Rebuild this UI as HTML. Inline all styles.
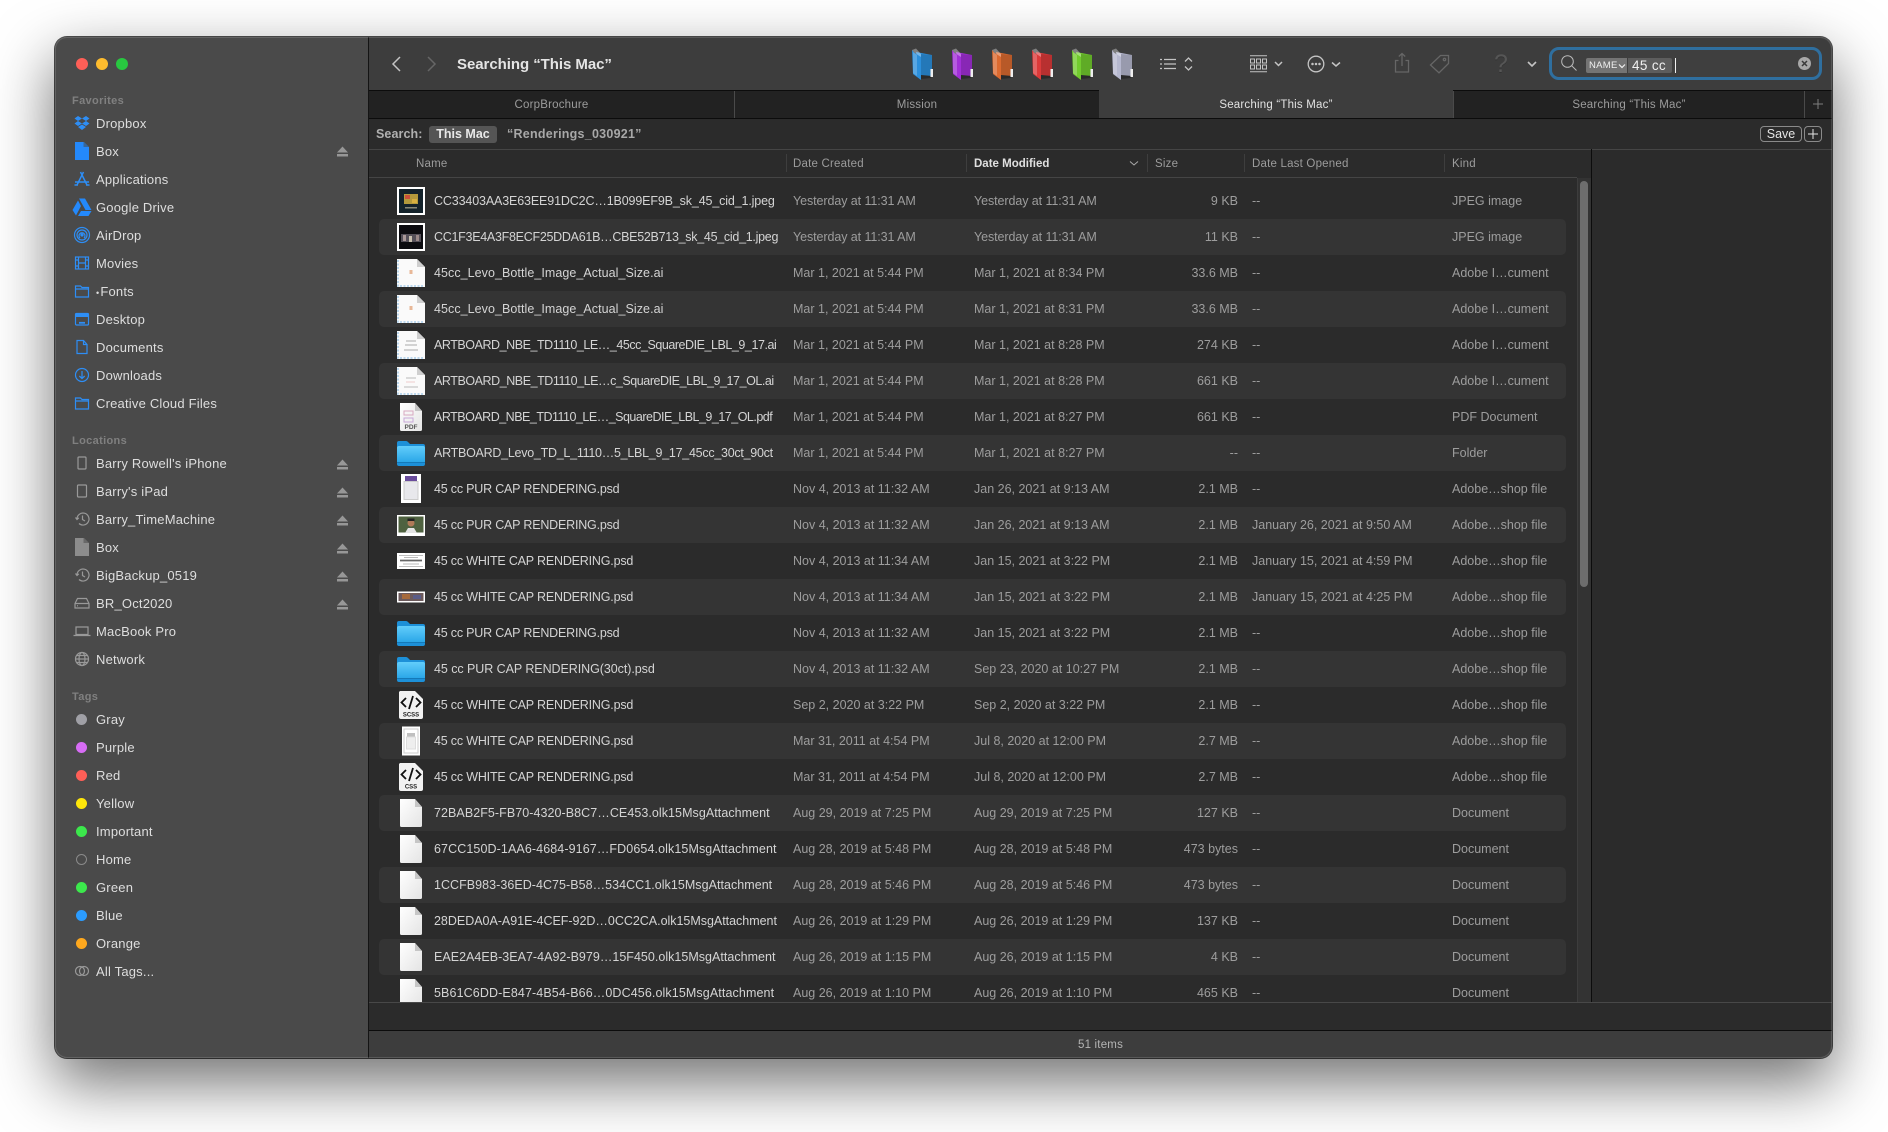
<!DOCTYPE html>
<html><head><meta charset="utf-8"><title>Finder</title>
<style>
html,body{margin:0;padding:0;background:#fff}
#root{position:relative;width:1888px;height:1132px;overflow:hidden;background:#fff;font-family:"Liberation Sans",sans-serif;font-size:13px}
#root div,#root span,#root svg{position:absolute}
#shadow{left:55px;top:37px;width:1777px;height:1021px;border-radius:12px;box-shadow:0 24px 60px 2px rgba(0,0,0,.55),0 0 0 1px rgba(20,20,20,.75)}
#win{left:55px;top:37px;width:1777px;height:1021px;border-radius:12px;overflow:hidden;background:#2b2b2b}
#in{left:-55px;top:-37px;width:1888px;height:1132px}
#edge{left:55px;top:37px;width:1775px;height:1019px;border-radius:12px;border:1px solid rgba(255,255,255,.14);pointer-events:none}
.s{left:96px;color:#dedede;line-height:16px;white-space:nowrap;letter-spacing:.2px;transform:translateY(1px)}
.h{left:72px;color:#8a8a8a;font-size:11px;line-height:14px;font-weight:bold;letter-spacing:.35px;opacity:.85;transform:translateY(1px)}
.i{left:73px;width:18px;height:18px;fill:none;stroke:#2e8ef5;stroke-width:1.2}
.g{stroke:#999}
.e{left:336px;width:13px;height:11px;fill:#979797}
.t{left:76px;width:11px;height:11px;border-radius:50%}
.tab{top:90px;height:28px;line-height:31px;text-align:center;font-size:11.5px;color:#9c9c9c;letter-spacing:.2px;white-space:nowrap}
.col{top:149px;height:28px;line-height:31px;font-size:11.5px;color:#9c9c9c;letter-spacing:.2px;white-space:nowrap}
.sep{top:154px;width:1px;height:18px;background:#3e3e3e}
.r{left:368px;width:1209px;height:36px}
.r.a::before{content:"";position:absolute;left:11px;top:0;width:1187px;height:36px;background:#343434;border-radius:5px}
.r span{top:10px;line-height:16px;white-space:nowrap;color:#9d9d9d;font-size:12.5px;letter-spacing:0}
.r .n{left:66px;color:#d4d4d4;font-size:12.5px;letter-spacing:0}
.r .c{left:425px}.r .m{left:606px}.r .z{right:339px}.r .o{left:884px}.r .k{left:1084px}
.r .y{letter-spacing:-.08px}
.r svg{left:29px;top:4px;width:28px;height:28px}
.tb{fill:none;stroke:#c4c4c4;stroke-width:1.3}
.dim{fill:none;stroke:#666;stroke-width:1.3}
.ff{top:48px;width:24px;height:33px}
</style></head><body>
<svg width="0" height="0" style="position:absolute">
<defs>
<linearGradient id="fb" x1="0" y1="0" x2="0" y2="1"><stop offset="0" stop-color="#62cdfb"/><stop offset="1" stop-color="#2ba7e8"/></linearGradient>
<linearGradient id="dg" x1="0" y1="0" x2="1" y2="1"><stop offset="0" stop-color="#fff"/><stop offset="1" stop-color="#e4e4e4"/></linearGradient>
<symbol id="doc" viewBox="0 0 28 28"><path d="M3 0H18L25 8V26.5a1.5 1.5 0 0 1-1.5 1.5H4.500a1.500 1.500 0 0 1-1.500-1.500Z" fill="url(#dg)"/><path d="M18 0L25 8H18Z" fill="#c6c6c6"/></symbol>
<symbol id="ai" viewBox="0 0 28 28"><path d="M0 0H20L28 8V28H0Z" fill="#fafafa"/><path d="M1 1V27H27" fill="none" stroke="#bcd8ee" stroke-width="2" stroke-dasharray="2 1.500"/><path d="M20 0L28 8H20Z" fill="#cfcfcf"/></symbol>
<symbol id="fo" viewBox="0 0 28 28"><path d="M0 4a2 2 0 0 1 2-2h7a3 3 0 0 1 2 1l2 2h13a2 2 0 0 1 2 2v18a2 2 0 0 1-2 2H2a2 2 0 0 1-2-2Z" fill="#1d90d8"/><path d="M0 9a2 2 0 0 1 2-2h24a2 2 0 0 1 2 2v14H0Z" fill="url(#fb)"/><path d="M0 23.500H28" stroke="#1479b8" stroke-width="1"/></symbol>
<symbol id="ff" viewBox="0 0 24 33"><path d="M4 4L20 7V28L9 27Z" fill="currentColor"/><path d="M9 6L20 7V28L9 27Z" fill="#000" opacity=".16"/><path d="M0 2L2 4.500L9 9V32L1 26Z" fill="currentColor"/><path d="M0 2L4 .500L9 6V9L2 4.500Z" fill="#fff" opacity=".35"/><path d="M1 4L5 7V28L1 25Z" fill="#fff" opacity=".22"/><path d="M9 27L20 28L19 30L9 31Z" fill="#000" opacity=".3"/><rect x="18.500" y="21" width="2.500" height="8" fill="#eee"/></symbol>
</defs></svg>
<div id="root">
<div id="shadow"></div>
<div id="win"><div id="in">
<!-- backgrounds -->
<div style="left:55px;top:37px;width:313px;height:1021px;background:#4a4a4a"></div>
<div style="left:368px;top:37px;width:1px;height:1021px;background:#141414"></div>
<div style="left:369px;top:37px;width:1463px;height:53px;background:#3d3d3d"></div>
<div style="left:369px;top:90px;width:1463px;height:1px;background:#0c0c0c"></div>
<div style="left:369px;top:91px;width:1463px;height:27px;background:#222"></div>
<div style="left:369px;top:118px;width:1463px;height:1px;background:#0c0c0c"></div>
<div style="left:369px;top:119px;width:1463px;height:884px;background:#2b2b2b"></div>
<div style="left:369px;top:149px;width:1463px;height:1px;background:#454545"></div>
<div style="left:369px;top:177px;width:1208px;height:1px;background:#454545"></div>
<div style="left:369px;top:1002px;width:1463px;height:1px;background:#484848"></div>
<div style="left:369px;top:1003px;width:1463px;height:27px;background:#2b2b2b"></div>
<div style="left:369px;top:1030px;width:1463px;height:1px;background:#0c0c0c"></div>
<div style="left:369px;top:1031px;width:1463px;height:27px;background:#3d3d3d"></div>

<!-- traffic lights -->
<div style="left:76px;top:58px;width:12px;height:12px;border-radius:50%;background:#fe5f57"></div>
<div style="left:96px;top:58px;width:12px;height:12px;border-radius:50%;background:#febc2e"></div>
<div style="left:116px;top:58px;width:12px;height:12px;border-radius:50%;background:#28c840"></div>

<!-- sidebar -->
<div class="h" style="top:93px">Favorites</div>
<svg class="i" style="top:114px;stroke:none;fill:#2e8ef5" viewBox="0 0 18 18"><path d="M5 2L9 4.500L5 7L1.500 4.500ZM13 2L16.500 4.500L13 7L9 4.500ZM5 7L9 9.500L5 12L1.500 9.500ZM13 7L16.500 9.500L13 12L9 9.500ZM5 13L9 10.500L13 13L9 16Z"/></svg>
<div class="s" style="top:115px">Dropbox</div>
<svg class="i" style="top:142px;stroke:none;fill:#2489fb" viewBox="0 0 18 18"><path d="M2 -.500H10.500L16 5V18H2Z"/><path d="M10.500 -.500L16 5H10.500Z" fill="#4a4a4a" opacity=".55"/></svg>
<div class="s" style="top:143px">Box</div>
<svg class="i" style="top:170px;stroke-width:1.500" viewBox="0 0 18 18"><path d="M7.500 2L14 15M10.500 2L4 15M2 12H16M1.500 15H5M13 15H16.500"/></svg>
<div class="s" style="top:171px">Applications</div>
<svg class="i" style="top:198px;stroke:none;fill:#2489fb;left:72px;width:20px;height:19px" viewBox="0 0 20 19"><path d="M7 .500H13L19.500 12H13.500ZM6 2.500L9 8L4 17.500L.5 12ZM6 18L9 13H19.500L16.500 18Z"/></svg>
<div class="s" style="top:199px">Google Drive</div>
<svg class="i" style="top:226px" viewBox="0 0 18 18"><circle cx="9" cy="9" r="7.500"/><circle cx="9" cy="9" r="5"/><path d="M7 12a3 3 0 1 1 4 0"/><circle cx="9" cy="9" r="1" fill="#2e8ef5"/></svg>
<div class="s" style="top:227px">AirDrop</div>
<svg class="i" style="top:254px" viewBox="0 0 18 18"><rect x="2.500" y="3" width="13" height="12"/><path d="M5.500 3V15M12.500 3V15M5.500 9H12.500M2.500 6H5.500M12.500 6H15.500M2.500 12H5.500M12.500 12H15.500"/></svg>
<div class="s" style="top:255px">Movies</div>
<svg class="i" style="top:282px" viewBox="0 0 18 18"><path d="M2.500 4H7.500L9 5.500H15.500V15H2.500ZM2.500 7H15.500"/></svg>
<div class="s" style="top:283px"><i style="font-style:normal;font-size:9px;margin-right:1px">•</i>Fonts</div>
<svg class="i" style="top:310px" viewBox="0 0 18 18"><rect x="2.500" y="3.500" width="13" height="11.500" rx="1"/><path d="M2.500 5.500H15.500" stroke-width="3"/><path d="M6 12.800H12" stroke-width="1.800"/></svg>
<div class="s" style="top:311px">Desktop</div>
<svg class="i" style="top:338px" viewBox="0 0 18 18"><path d="M4 2.500H10.500L14 6.500V15.500H4ZM10.500 2.500V6.500H14"/></svg>
<div class="s" style="top:339px">Documents</div>
<svg class="i" style="top:366px" viewBox="0 0 18 18"><circle cx="9" cy="9" r="6.500"/><path d="M9 5V12.500M6.300 10L9 12.500L11.700 10"/></svg>
<div class="s" style="top:367px">Downloads</div>
<svg class="i" style="top:394px" viewBox="0 0 18 18"><path d="M2.500 4H7.500L9 5.500H15.500V15H2.500ZM2.500 7H15.500"/></svg>
<div class="s" style="top:395px">Creative Cloud Files</div>

<div class="h" style="top:433px">Locations</div>
<svg class="i g" style="top:454px" viewBox="0 0 18 18"><rect x="5" y="3" width="8" height="12" rx="1"/></svg>
<div class="s" style="top:455px">Barry Rowell's iPhone</div>
<svg class="i g" style="top:482px" viewBox="0 0 18 18"><rect x="4.500" y="3" width="9" height="12" rx="1"/></svg>
<div class="s" style="top:483px">Barry's iPad</div>
<svg class="i g" style="top:510px" viewBox="0 0 18 18"><path d="M4 9a6 6 0 1 1 2 4.500M2.500 7.500L4 9.500L5.800 7.800M9.500 5.500V9.500L12 11"/></svg>
<div class="s" style="top:511px">Barry_TimeMachine</div>
<svg class="i" style="top:538px;stroke:none;fill:#8c8c8c" viewBox="0 0 18 18"><path d="M2 -.500H10.500L16 5V18H2Z"/><path d="M10.500 -.500L16 5H10.500Z" fill="#4a4a4a" opacity=".55"/></svg>
<div class="s" style="top:539px">Box</div>
<svg class="i g" style="top:566px" viewBox="0 0 18 18"><path d="M4 9a6 6 0 1 1 2 4.500M2.500 7.500L4 9.500L5.800 7.800M9.500 5.500V9.500L12 11"/></svg>
<div class="s" style="top:567px">BigBackup_0519</div>
<svg class="i g" style="top:594px" viewBox="0 0 18 18"><path d="M4.500 4.500H13.500L16 9.500V14H2V9.500ZM2 9.500H16M4 11.800H5"/></svg>
<div class="s" style="top:595px">BR_Oct2020</div>
<svg class="i g" style="top:622px" viewBox="0 0 18 18"><path d="M3 5H15V12.500H3ZM.5 13.500H17.500"/></svg>
<div class="s" style="top:623px">MacBook Pro</div>
<svg class="i g" style="top:650px" viewBox="0 0 18 18"><circle cx="9" cy="9" r="6.500"/><ellipse cx="9" cy="9" rx="3" ry="6.500"/><path d="M2.500 9H15.500M3.500 5.500H14.500M3.500 12.500H14.500"/></svg>
<div class="s" style="top:651px">Network</div>

<div class="h" style="top:689px">Tags</div>
<div class="t" style="top:714px;background:#a0a0a6"></div><div class="s" style="top:711px">Gray</div>
<div class="t" style="top:742px;background:#d76cf5"></div><div class="s" style="top:739px">Purple</div>
<div class="t" style="top:770px;background:#fe5f57"></div><div class="s" style="top:767px">Red</div>
<div class="t" style="top:798px;background:#fee60a"></div><div class="s" style="top:795px">Yellow</div>
<div class="t" style="top:826px;background:#3ce84c"></div><div class="s" style="top:823px">Important</div>
<div class="t" style="top:854px;border:1px solid #8a8a8a;width:9px;height:9px"></div><div class="s" style="top:851px">Home</div>
<div class="t" style="top:882px;background:#3ce84c"></div><div class="s" style="top:879px">Green</div>
<div class="t" style="top:910px;background:#2b9cff"></div><div class="s" style="top:907px">Blue</div>
<div class="t" style="top:938px;background:#fea81e"></div><div class="s" style="top:935px">Orange</div>
<svg class="i g" style="top:962px" viewBox="0 0 18 18"><circle cx="7" cy="9" r="4.500"/><circle cx="11" cy="9" r="4.500"/></svg>
<div class="s" style="top:963px">All Tags...</div>

<!-- eject -->
<svg class="e" style="top:146px" viewBox="0 0 13 11"><path d="M6.500 .5L12 6.500H1ZM1 8H12V10.500H1Z"/></svg>
<svg class="e" style="top:459px" viewBox="0 0 13 11"><path d="M6.500 .5L12 6.500H1ZM1 8H12V10.500H1Z"/></svg>
<svg class="e" style="top:487px" viewBox="0 0 13 11"><path d="M6.500 .5L12 6.500H1ZM1 8H12V10.500H1Z"/></svg>
<svg class="e" style="top:515px" viewBox="0 0 13 11"><path d="M6.500 .5L12 6.500H1ZM1 8H12V10.500H1Z"/></svg>
<svg class="e" style="top:543px" viewBox="0 0 13 11"><path d="M6.500 .5L12 6.500H1ZM1 8H12V10.500H1Z"/></svg>
<svg class="e" style="top:571px" viewBox="0 0 13 11"><path d="M6.500 .5L12 6.500H1ZM1 8H12V10.500H1Z"/></svg>
<svg class="e" style="top:599px" viewBox="0 0 13 11"><path d="M6.500 .5L12 6.500H1ZM1 8H12V10.500H1Z"/></svg>

<!-- toolbar -->
<svg class="tb" style="left:389px;top:54px;width:16px;height:20px" viewBox="0 0 16 20"><path d="M11 3L4 10L11 17" stroke-width="1.500"/></svg>
<svg class="dim" style="left:423px;top:54px;width:16px;height:20px" viewBox="0 0 16 20"><path d="M5 3L12 10L5 17" stroke-width="1.500"/></svg>
<div style="left:457px;top:55px;font-size:15px;font-weight:bold;color:#e4e4e4;line-height:20px;white-space:nowrap;letter-spacing:-.05px">Searching “This Mac”</div>
<svg class="ff" style="left:912px;color:#2b8fdc"><use href="#ff"/></svg>
<svg class="ff" style="left:952px;color:#a22fd8"><use href="#ff"/></svg>
<svg class="ff" style="left:992px;color:#dc6a30"><use href="#ff"/></svg>
<svg class="ff" style="left:1032px;color:#dc3a3a"><use href="#ff"/></svg>
<svg class="ff" style="left:1072px;color:#72cc2e"><use href="#ff"/></svg>
<svg class="ff" style="left:1112px;color:#b6b8cf"><use href="#ff"/></svg>
<svg class="tb" style="left:1159px;top:56px;width:34px;height:16px" viewBox="0 0 34 16"><path d="M5 3.500H17M5 8H17M5 12.500H17M1 3.500H3M1 8H3M1 12.500H3M26 5.500L29.500 2L33 5.500M26 10.500L29.500 14L33 10.500"/></svg>
<svg class="tb" style="left:1249px;top:55px;width:36px;height:18px" viewBox="0 0 36 18"><path d="M1 .7H18M1 16.800H18M1.500 4H5.500V8H1.500ZM7.500 4H11.500V8H7.500ZM13.500 4H17.500V8H13.500ZM1.500 10H5.500V14H1.500ZM7.500 10H11.500V14H7.500ZM13.500 10H17.500V14H13.500Z" stroke-width="1"/><path d="M26 7L29.500 10.500L33 7" stroke-width="1.500"/></svg>
<svg class="tb" style="left:1307px;top:55px;width:36px;height:18px" viewBox="0 0 36 18"><circle cx="9" cy="9" r="7.800"/><circle cx="5.500" cy="9" r=".6" fill="#c4c4c4"/><circle cx="9" cy="9" r=".6" fill="#c4c4c4"/><circle cx="12.500" cy="9" r=".6" fill="#c4c4c4"/><path d="M25 7.500L29 11L33 7.500" stroke-width="1.500"/></svg>
<svg class="dim" style="left:1394px;top:52px;width:16px;height:21px" viewBox="0 0 16 21"><path d="M4.500 8.500H1.500V20H14.500V8.500H11.500M8 14V1.500M4.800 4.500L8 1.500L11.200 4.500"/></svg>
<svg class="dim" style="left:1429px;top:54px;width:22px;height:20px" viewBox="0 0 22 20"><path d="M1.500 11L11.500 1.500H19.500V9.500L10 18.800Z"/><circle cx="15.500" cy="5.500" r="1.200"/></svg>
<div style="left:1494px;top:51px;font-size:25px;line-height:26px;color:#565656;text-shadow:0 1px 0 #333">?</div>
<svg class="tb" style="left:1526px;top:58px;width:12px;height:12px" viewBox="0 0 12 12"><path d="M2 4L6 8L10 4" stroke-width="1.600"/></svg>

<!-- search field -->
<div style="left:1549px;top:47px;width:267px;height:27px;border:3.500px solid #2f6f9f;border-radius:10px;background:#3f3f3f"></div>
<svg style="left:1560px;top:54px;width:18px;height:18px;fill:none;stroke:#bbb;stroke-width:1" viewBox="0 0 18 18"><circle cx="7.500" cy="7.500" r="5.800"/><path d="M11.800 11.800L16.500 16.500"/></svg>
<div style="left:1586px;top:58px;width:41px;height:15px;background:#747474;border-radius:2px 0 0 2px"></div>
<div style="left:1589px;top:58px;color:#f0f0f0;font-size:9.500px;line-height:16px;letter-spacing:.3px">NAME</div>
<svg style="left:1618px;top:62px;width:8px;height:8px;fill:none;stroke:#f0f0f0;stroke-width:1.200" viewBox="0 0 8 8"><path d="M1 2.500L4 5.500L7 2.500"/></svg>
<div style="left:1628px;top:58px;width:44px;height:15px;background:#5d5d5d;border-radius:0 2px 2px 0"></div>
<div style="left:1632px;top:57px;color:#f0f0f0;font-size:13.500px;line-height:17px;letter-spacing:.35px">45 cc</div>
<div style="left:1675px;top:58px;width:1px;height:15px;background:#f0f0f0"></div>
<div style="left:1798px;top:57px;width:13px;height:13px;border-radius:50%;background:#a8a8a8"></div>
<svg style="left:1798px;top:57px;width:13px;height:13px;fill:none;stroke:#3a3a3a;stroke-width:1.500" viewBox="0 0 13 13"><path d="M4 4L9 9M9 4L4 9"/></svg>

<!-- tabs -->
<div class="tab" style="left:369px;width:365px">CorpBrochure</div>
<div style="left:734px;top:91px;width:1px;height:27px;background:#4a4a4a"></div>
<div class="tab" style="left:735px;width:364px">Mission</div>
<div style="left:1099px;top:90px;width:354px;height:28px;background:#3d3d3d"></div>
<div class="tab" style="left:1099px;width:354px;color:#e2e2e2">Searching “This Mac”</div>
<div style="left:1453px;top:91px;width:1px;height:27px;background:#4a4a4a"></div>
<div class="tab" style="left:1454px;width:350px">Searching “This Mac”</div>
<div style="left:1804px;top:91px;width:1px;height:27px;background:#4a4a4a"></div>
<svg style="left:1811px;top:97px;width:14px;height:14px;fill:none;stroke:#7e7e7e;stroke-width:1" viewBox="0 0 14 14"><path d="M7 2V12M2 7H12"/></svg>

<!-- search scope -->
<div style="left:376px;top:126px;color:#b0b0b0;font-size:12.500px;font-weight:bold;line-height:17px;letter-spacing:.1px">Search:</div>
<div style="left:429px;top:126px;width:68px;height:17px;border-radius:3px;background:#555"></div>
<div style="left:429px;top:125px;width:68px;text-align:center;color:#e8e8e8;font-size:12.500px;font-weight:bold;line-height:18px">This Mac</div>
<div style="left:507px;top:125px;color:#a8a8a8;font-size:12.500px;font-weight:bold;line-height:18px;letter-spacing:.25px">“Renderings_030921”</div>
<div style="left:1760px;top:126px;width:40px;height:14px;border:1px solid #8a8a8a;border-radius:4px;text-align:center;color:#e4e4e4;font-size:12.500px;line-height:14px">Save</div>
<div style="left:1804px;top:126px;width:16px;height:14px;border:1px solid #8a8a8a;border-radius:4px"></div>
<svg style="left:1805px;top:127px;width:16px;height:14px;fill:none;stroke:#e4e4e4;stroke-width:1" viewBox="0 0 16 14"><path d="M8 2V12M3 7H13"/></svg>

<!-- column header -->
<div class="col" style="left:416px">Name</div>
<div class="sep" style="left:786px"></div><div class="col" style="left:793px">Date Created</div>
<div class="sep" style="left:966px"></div><div class="col" style="left:974px;color:#e0e0e0;font-weight:bold;letter-spacing:0">Date Modified</div>
<svg style="left:1129px;top:158px;width:10px;height:10px;fill:none;stroke:#aaa;stroke-width:1" viewBox="0 0 10 10"><path d="M1 3.500L5 7L9 3.500"/></svg>
<div class="sep" style="left:1147px"></div><div class="col" style="left:1155px">Size</div>
<div class="sep" style="left:1244px"></div><div class="col" style="left:1252px">Date Last Opened</div>
<div class="sep" style="left:1444px"></div><div class="col" style="left:1452px">Kind</div>

<!-- scrollbar and right panel -->
<div style="left:1577px;top:178px;width:14px;height:824px;background:#333;border-left:1px solid #3d3d3d;box-sizing:border-box"></div>
<div style="left:1580px;top:181px;width:8px;height:406px;border-radius:4px;background:#6d6d6d"></div>
<div style="left:1591px;top:149px;width:1px;height:853px;background:#0c0c0c"></div>

<!-- rows -->
<div style="left:0;top:177px;width:1577px;height:825px;overflow:hidden">
<div class="r" style="top:6px"><svg viewBox="0 0 28 28"><rect width="28" height="28" fill="#fff"/><rect x="2" y="2" width="24" height="24" fill="#14232b"/><rect x="7" y="7" width="14" height="10" fill="#b39a3c"/><rect x="8" y="8" width="5" height="4" fill="#c9503a"/><rect x="15" y="12" width="5" height="4" fill="#d8b040"/><rect x="8" y="20" width="12" height="1.500" fill="#887"/></svg><span class="n" style="letter-spacing:-.14px">CC33403AA3E63EE91DC2C…1B099EF9B_sk_45_cid_1.jpeg</span><span class="c y">Yesterday at 11:31 AM</span><span class="m y">Yesterday at 11:31 AM</span><span class="z">9 KB</span><span class="o">--</span><span class="k">JPEG image</span></div>
<div class="r a" style="top:42px"><svg viewBox="0 0 28 28"><rect width="28" height="28" fill="#fff"/><rect x="2" y="2" width="24" height="24" fill="#0c0c10"/><rect x="4" y="11" width="20" height="8" fill="#555059"/><rect x="6" y="12" width="3" height="6" fill="#a99"/><rect x="12" y="13" width="3" height="6" fill="#c8c0b0"/><rect x="19" y="12" width="3" height="6" fill="#988"/></svg><span class="n" style="letter-spacing:-.28px">CC1F3E4A3F8ECF25DDA61B…CBE52B713_sk_45_cid_1.jpeg</span><span class="c y">Yesterday at 11:31 AM</span><span class="m y">Yesterday at 11:31 AM</span><span class="z">11 KB</span><span class="o">--</span><span class="k">JPEG image</span></div>
<div class="r" style="top:78px"><svg viewBox="0 0 28 28"><use href="#ai"/><rect x="12.500" y="11" width="3" height="4" fill="#e8b898"/></svg><span class="n" style="letter-spacing:.06px">45cc_Levo_Bottle_Image_Actual_Size.ai</span><span class="c">Mar 1, 2021 at 5:44 PM</span><span class="m">Mar 1, 2021 at 8:34 PM</span><span class="z">33.6 MB</span><span class="o">--</span><span class="k">Adobe I…cument</span></div>
<div class="r a" style="top:114px"><svg viewBox="0 0 28 28"><use href="#ai"/><rect x="12.500" y="11" width="3" height="4" fill="#e8b898"/></svg><span class="n" style="letter-spacing:.06px">45cc_Levo_Bottle_Image_Actual_Size.ai</span><span class="c">Mar 1, 2021 at 5:44 PM</span><span class="m">Mar 1, 2021 at 8:31 PM</span><span class="z">33.6 MB</span><span class="o">--</span><span class="k">Adobe I…cument</span></div>
<div class="r" style="top:150px"><svg viewBox="0 0 28 28"><use href="#ai"/><path d="M9 10H19M8 14H20M7 19H21" stroke="#aaa" stroke-width="1"/></svg><span class="n" style="letter-spacing:-.45px">ARTBOARD_NBE_TD1110_LE…_45cc_SquareDIE_LBL_9_17.ai</span><span class="c">Mar 1, 2021 at 5:44 PM</span><span class="m">Mar 1, 2021 at 8:28 PM</span><span class="z">274 KB</span><span class="o">--</span><span class="k">Adobe I…cument</span></div>
<div class="r a" style="top:186px"><svg viewBox="0 0 28 28"><use href="#ai"/><path d="M9 11H19M7 20H21" stroke="#bbb" stroke-width="1"/><path d="M9 15H18" stroke="#ecc" stroke-width="1"/></svg><span class="n" style="letter-spacing:-.44px">ARTBOARD_NBE_TD1110_LE…c_SquareDIE_LBL_9_17_OL.ai</span><span class="c">Mar 1, 2021 at 5:44 PM</span><span class="m">Mar 1, 2021 at 8:28 PM</span><span class="z">661 KB</span><span class="o">--</span><span class="k">Adobe I…cument</span></div>
<div class="r" style="top:222px"><svg viewBox="0 0 28 28"><use href="#doc"/><rect x="7" y="8" width="9" height="4" fill="none" stroke="#d8a8c0" stroke-width="1"/><rect x="7" y="15" width="9" height="4" fill="none" stroke="#c8a8d8" stroke-width="1"/><text x="14" y="26" text-anchor="middle" font-size="6.500" font-weight="bold" fill="#555" font-family="Liberation Sans,sans-serif">PDF</text></svg><span class="n" style="letter-spacing:-.5px">ARTBOARD_NBE_TD1110_LE…_SquareDIE_LBL_9_17_OL.pdf</span><span class="c">Mar 1, 2021 at 5:44 PM</span><span class="m">Mar 1, 2021 at 8:27 PM</span><span class="z">661 KB</span><span class="o">--</span><span class="k">PDF Document</span></div>
<div class="r a" style="top:258px"><svg viewBox="0 0 28 28"><use href="#fo"/></svg><span class="n" style="letter-spacing:-.26px">ARTBOARD_Levo_TD_L_1110…5_LBL_9_17_45cc_30ct_90ct</span><span class="c">Mar 1, 2021 at 5:44 PM</span><span class="m">Mar 1, 2021 at 8:27 PM</span><span class="z">--</span><span class="o">--</span><span class="k">Folder</span></div>
<div class="r" style="top:294px"><svg viewBox="0 0 28 28" style="overflow:visible"><rect x="4" y="-1" width="20" height="29" fill="#fff"/><rect x="8" y="1" width="12" height="5" fill="#6a4c9c"/><rect x="7" y="6.500" width="14" height="18" fill="#e8e8ec" stroke="#ccc"/></svg><span class="n" style="letter-spacing:-.2px">45 cc PUR CAP RENDERING.psd</span><span class="c">Nov 4, 2013 at 11:32 AM</span><span class="m">Jan 26, 2021 at 9:13 AM</span><span class="z">2.1 MB</span><span class="o">--</span><span class="k">Adobe…shop file</span></div>
<div class="r a" style="top:330px"><svg viewBox="0 0 28 28"><rect y="4" width="28" height="21" fill="#fff"/><rect x="1.500" y="5.500" width="25" height="16" fill="#4f6240"/><path d="M8 22L11 17H17L20 22Z" fill="#e4e4e4"/><circle cx="14" cy="12" r="3.500" fill="#b07a58"/><rect x="10.500" y="7.500" width="7" height="2.500" fill="#222"/></svg><span class="n" style="letter-spacing:-.2px">45 cc PUR CAP RENDERING.psd</span><span class="c">Nov 4, 2013 at 11:32 AM</span><span class="m">Jan 26, 2021 at 9:13 AM</span><span class="z">2.1 MB</span><span class="o">January 26, 2021 at 9:50 AM</span><span class="k">Adobe…shop file</span></div>
<div class="r" style="top:366px"><svg viewBox="0 0 28 28"><rect y="6" width="28" height="16" fill="#fff"/><path d="M2 8.500H26M2 19.500H26" stroke="#aaa" stroke-width=".8"/><path d="M3 13.500H25" stroke="#666" stroke-width="1.800"/><path d="M7 10.500H21M6 17H22" stroke="#bbb" stroke-width="1"/></svg><span class="n" style="letter-spacing:-.19px">45 cc WHITE CAP RENDERING.psd</span><span class="c">Nov 4, 2013 at 11:34 AM</span><span class="m">Jan 15, 2021 at 3:22 PM</span><span class="z">2.1 MB</span><span class="o">January 15, 2021 at 4:59 PM</span><span class="k">Adobe…shop file</span></div>
<div class="r a" style="top:402px"><svg viewBox="0 0 28 28"><rect y="8.500" width="28" height="11" fill="#fff"/><rect x="1.500" y="10" width="25" height="8" fill="#6c5a5c"/><rect x="5" y="11" width="8" height="5" fill="#a66a3c"/><rect x="16" y="12" width="8" height="4" fill="#5a5c88"/></svg><span class="n" style="letter-spacing:-.19px">45 cc WHITE CAP RENDERING.psd</span><span class="c">Nov 4, 2013 at 11:34 AM</span><span class="m">Jan 15, 2021 at 3:22 PM</span><span class="z">2.1 MB</span><span class="o">January 15, 2021 at 4:25 PM</span><span class="k">Adobe…shop file</span></div>
<div class="r" style="top:438px"><svg viewBox="0 0 28 28"><use href="#fo"/></svg><span class="n" style="letter-spacing:-.2px">45 cc PUR CAP RENDERING.psd</span><span class="c">Nov 4, 2013 at 11:32 AM</span><span class="m">Jan 15, 2021 at 3:22 PM</span><span class="z">2.1 MB</span><span class="o">--</span><span class="k">Adobe…shop file</span></div>
<div class="r a" style="top:474px"><svg viewBox="0 0 28 28"><use href="#fo"/></svg><span class="n" style="letter-spacing:-.06px">45 cc PUR CAP RENDERING(30ct).psd</span><span class="c">Nov 4, 2013 at 11:32 AM</span><span class="m">Sep 23, 2020 at 10:27 PM</span><span class="z">2.1 MB</span><span class="o">--</span><span class="k">Adobe…shop file</span></div>
<div class="r" style="top:510px"><svg viewBox="0 0 28 28" style="overflow:visible"><path d="M3 0H18L26 8V26a2 2 0 0 1-2 2H4a2 2 0 0 1-2-2V1Z" fill="#f2f2f2"/><path d="M9 7L4.500 11.500L9 16M19 7L23.500 11.500L19 16M16 5L12 18" fill="none" stroke="#111" stroke-width="1.800"/><text x="14" y="25.500" text-anchor="middle" font-size="6" font-weight="bold" fill="#222" font-family="Liberation Sans,sans-serif">SCSS</text></svg><span class="n" style="letter-spacing:-.19px">45 cc WHITE CAP RENDERING.psd</span><span class="c">Sep 2, 2020 at 3:22 PM</span><span class="m">Sep 2, 2020 at 3:22 PM</span><span class="z">2.1 MB</span><span class="o">--</span><span class="k">Adobe…shop file</span></div>
<div class="r a" style="top:546px"><svg viewBox="0 0 28 28" style="overflow:visible"><rect x="5" y="-.5" width="18" height="29" fill="#fff"/><rect x="7" y="2" width="14" height="24" fill="none" stroke="#ccc"/><rect x="10" y="6" width="8" height="4" fill="#c0c0c0"/><rect x="9.500" y="10" width="9" height="12" fill="#eee" stroke="#ddd"/></svg><span class="n" style="letter-spacing:-.19px">45 cc WHITE CAP RENDERING.psd</span><span class="c">Mar 31, 2011 at 4:54 PM</span><span class="m">Jul 8, 2020 at 12:00 PM</span><span class="z">2.7 MB</span><span class="o">--</span><span class="k">Adobe…shop file</span></div>
<div class="r" style="top:582px"><svg viewBox="0 0 28 28" style="overflow:visible"><path d="M3 0H18L26 8V26a2 2 0 0 1-2 2H4a2 2 0 0 1-2-2V1Z" fill="#f2f2f2"/><path d="M9 7L4.500 11.500L9 16M19 7L23.500 11.500L19 16M16 5L12 18" fill="none" stroke="#111" stroke-width="1.800"/><text x="14" y="25.500" text-anchor="middle" font-size="6" font-weight="bold" fill="#222" font-family="Liberation Sans,sans-serif">CSS</text></svg><span class="n" style="letter-spacing:-.19px">45 cc WHITE CAP RENDERING.psd</span><span class="c">Mar 31, 2011 at 4:54 PM</span><span class="m">Jul 8, 2020 at 12:00 PM</span><span class="z">2.7 MB</span><span class="o">--</span><span class="k">Adobe…shop file</span></div>
<div class="r a" style="top:618px"><svg viewBox="0 0 28 28"><use href="#doc"/></svg><span class="n" style="letter-spacing:.06px">72BAB2F5-FB70-4320-B8C7…CE453.olk15MsgAttachment</span><span class="c">Aug 29, 2019 at 7:25 PM</span><span class="m">Aug 29, 2019 at 7:25 PM</span><span class="z">127 KB</span><span class="o">--</span><span class="k">Document</span></div>
<div class="r" style="top:654px"><svg viewBox="0 0 28 28"><use href="#doc"/></svg><span class="n" style="letter-spacing:.1px">67CC150D-1AA6-4684-9167…FD0654.olk15MsgAttachment</span><span class="c">Aug 28, 2019 at 5:48 PM</span><span class="m">Aug 28, 2019 at 5:48 PM</span><span class="z">473 bytes</span><span class="o">--</span><span class="k">Document</span></div>
<div class="r a" style="top:690px"><svg viewBox="0 0 28 28"><use href="#doc"/></svg><span class="n" style="letter-spacing:.04px">1CCFB983-36ED-4C75-B58…534CC1.olk15MsgAttachment</span><span class="c">Aug 28, 2019 at 5:46 PM</span><span class="m">Aug 28, 2019 at 5:46 PM</span><span class="z">473 bytes</span><span class="o">--</span><span class="k">Document</span></div>
<div class="r" style="top:726px"><svg viewBox="0 0 28 28"><use href="#doc"/></svg><span class="n" style="letter-spacing:-.02px">28DEDA0A-A91E-4CEF-92D…0CC2CA.olk15MsgAttachment</span><span class="c">Aug 26, 2019 at 1:29 PM</span><span class="m">Aug 26, 2019 at 1:29 PM</span><span class="z">137 KB</span><span class="o">--</span><span class="k">Document</span></div>
<div class="r a" style="top:762px"><svg viewBox="0 0 28 28"><use href="#doc"/></svg><span class="n" style="letter-spacing:.02px">EAE2A4EB-3EA7-4A92-B979…15F450.olk15MsgAttachment</span><span class="c">Aug 26, 2019 at 1:15 PM</span><span class="m">Aug 26, 2019 at 1:15 PM</span><span class="z">4 KB</span><span class="o">--</span><span class="k">Document</span></div>
<div class="r" style="top:798px"><svg viewBox="0 0 28 28"><use href="#doc"/></svg><span class="n" style="letter-spacing:.11px">5B61C6DD-E847-4B54-B66…0DC456.olk15MsgAttachment</span><span class="c">Aug 26, 2019 at 1:10 PM</span><span class="m">Aug 26, 2019 at 1:10 PM</span><span class="z">465 KB</span><span class="o">--</span><span class="k">Document</span></div>
</div>

<!-- status -->
<div style="left:369px;top:1037px;width:1463px;text-align:center;color:#b4b4b4;font-size:11.500px;line-height:16px;letter-spacing:.2px">51 items</div>
</div></div>
<div id="edge"></div>
</div>
</body></html>
